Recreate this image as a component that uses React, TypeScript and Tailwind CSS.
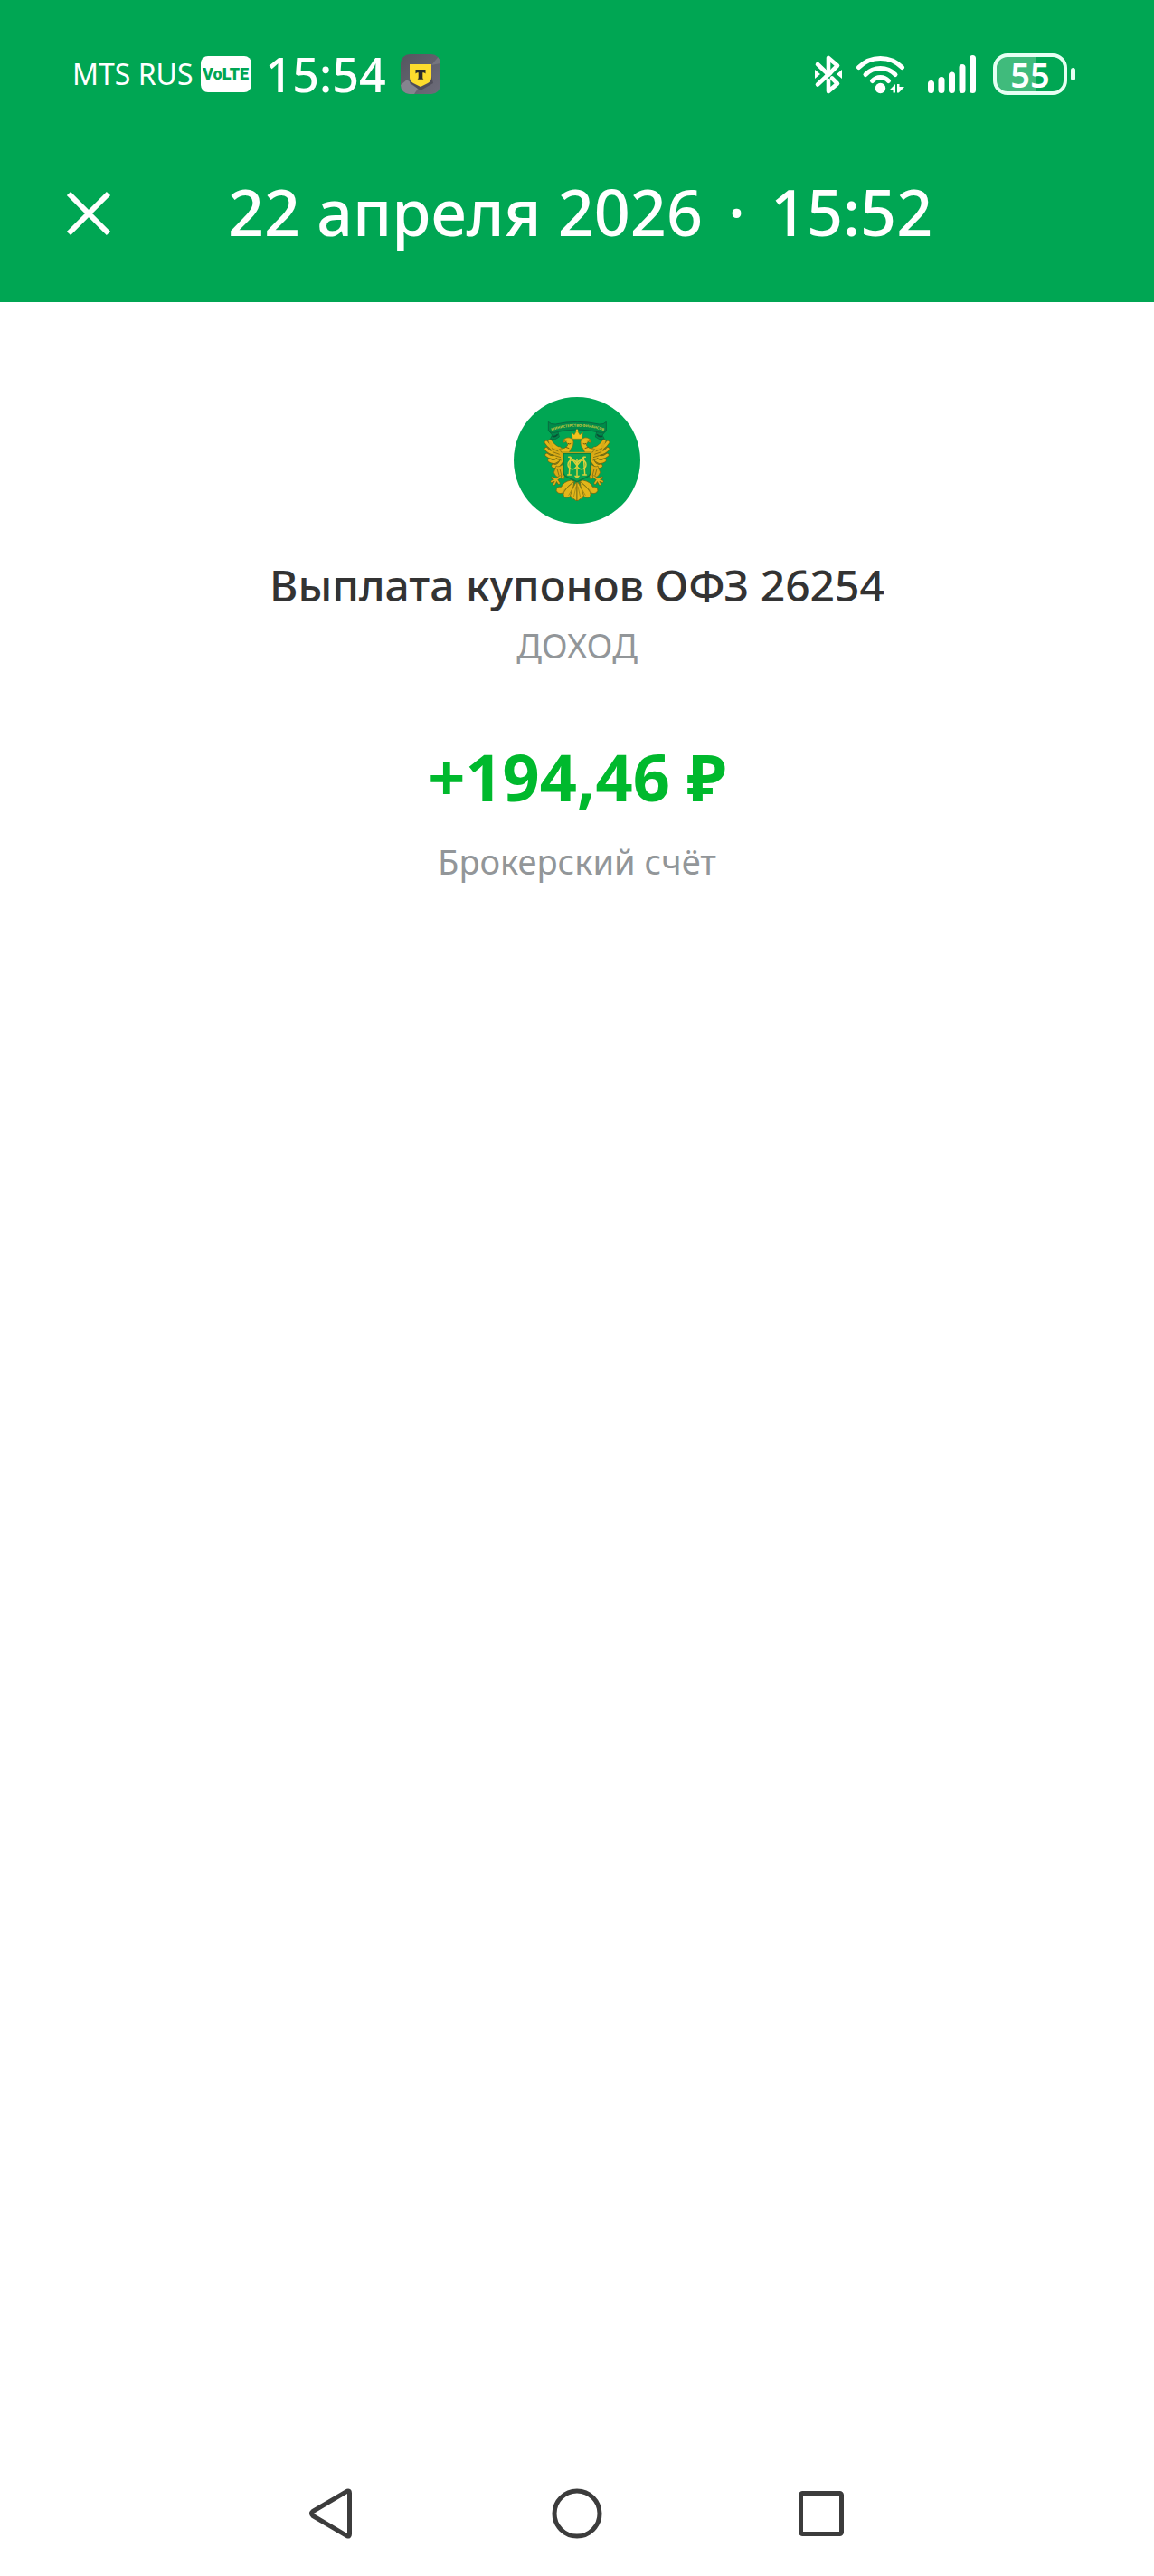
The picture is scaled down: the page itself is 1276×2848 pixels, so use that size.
import type { ReactNode } from 'react';

function TBankIcon() {
  return (
    <svg viewBox="0 0 44 44" className="size-11" aria-hidden="true">
      <defs>
        <linearGradient id="tile" x1="0" y1="0" x2="1" y2="1">
          <stop offset="0" stopColor="#55565f" />
          <stop offset="1" stopColor="#6d6c7a" />
        </linearGradient>
        <clipPath id="tileClip">
          <rect width="44" height="44" rx="10" />
        </clipPath>
      </defs>
      <g clipPath="url(#tileClip)">
        <rect width="44" height="44" fill="url(#tile)" />
        <path d="M44 0v10L34 12z" fill="#75757f" />
        <path d="M0 34l7-6 12 10-4 6H0z" fill="#85848f" />
        <path d="M10 32l12 8 14-8-2-8-22 0z" fill="#3f3e4a" opacity="0.6" />
      </g>
      <path d="M10 11h24v15c0 3-2 5-4 6l-8 4-8-4c-2-1-4-3-4-6z" fill="#fddc2d" />
      <path d="M16.500 17h11v4.500c-.7-.9-1.800-1.300-3.200-1.300v5.300c0 1.200.5 1.900 1.300 2.300h-7.200c.8-.4 1.300-1.100 1.300-2.300v-5.300c-1.400 0-2.500.4-3.200 1.300z" fill="#2b2b2b" />
    </svg>
  );
}

function BluetoothIcon() {
  return (
    <svg viewBox="0 0 32 44" className="h-11 w-8" aria-hidden="true">
      <g fill="none" stroke="white" strokeWidth="4.600" strokeLinecap="round" strokeLinejoin="round">
        <path d="M4 11l12 11.500L26 12.500 16 4v12" />
        <path d="M4 33.500L16 22.500M16 29v12l10-8.500-6-6" />
        <path d="M14 24l4-3" />
      </g>
      <path d="M1 17v10l6-5zM31 17v10l-6-5z" fill="white" />
    </svg>
  );
}

function WifiIcon() {
  return (
    <svg viewBox="0 0 56 44" className="h-11 w-14" aria-hidden="true">
      <g fill="none" stroke="white" strokeWidth="5" strokeLinecap="round">
        <path d="M3.500 14.500c13-13.500 35-13.500 48 0" />
        <path d="M11 22.500c9-9.300 24-9.300 33 0" />
        <path d="M18.500 29.500c5-5.300 13-5.300 18 0" />
      </g>
      <circle cx="27.500" cy="37.500" r="5.700" fill="white" />
      <path d="M37.500 39.500l6.500-6.500v9.500h-2.500v-3zM46 33h2.500v3H54L47.800 42.500H46z" fill="white" />
    </svg>
  );
}

function SignalIcon() {
  return (
    <svg viewBox="0 0 54 44" className="h-11 w-[54px]" aria-hidden="true">
      <g stroke="white" strokeWidth="7" strokeLinecap="round">
        <path d="M3.500 32.500v7M15 28.500v11M26.500 23v16.500M38 14.500v25M49.500 4.500v35" />
      </g>
    </svg>
  );
}

function Battery() {
  return (
    <div className="flex items-center gap-1" aria-label="Battery 55%">
      <div className="flex h-[46px] w-[82px] items-center justify-center rounded-2xl border-4 border-[#e6fff3] bg-linear-to-r from-[#40bb7c] from-60% to-transparent to-60% text-[38px] leading-9 font-semibold">
        55
      </div>
      <div className="h-3.5 w-[5px] rounded-full bg-[#e6fff3]" />
    </div>
  );
}

const leftHalf = (
  <g>
    <path d="M142 174l12 26 36 0v42l-28 18-20-30-8-34z" fill="#8a7a12" />
    <g fill="none" stroke="#6f6a14" strokeWidth="13" strokeLinecap="round">
      <path d="M176 196Q150 204 132 176M178 206Q150 220 132 198M180 214Q154 236 134 218M184 220Q162 250 143 236M188 226Q174 262 155 254M190 204Q160 196 144 172" />
    </g>
    <g fill="none" stroke="#e3b417" strokeWidth="9" strokeLinecap="round">
      <path d="M176 196Q150 204 132 176M178 206Q150 220 132 198M180 214Q154 236 134 218M184 220Q162 250 143 236M188 226Q174 262 155 254M190 204Q160 196 144 172" />
    </g>
    <path d="M140 174q8-4 10 4l4 16 34 2-4 40-14-6-20-20z" fill="#d9aa16" />
    <path d="M150 196l22 10M154 208l22 8M160 220l20 6M168 232l14 4" stroke="#7a6a10" strokeWidth="2.500" fill="none" />
    <path d="M176 198q22 0 28-14l-6-10q-8 4-12 2 2-12 14-15 16-3 22 12 2 14-8 24l-6 12h-26z" fill="#e6b91b" stroke="#6f6a14" strokeWidth="2" />
    <path d="M188 175q6-8 14-6M204 180q6 4 10 0M196 192l12 4" stroke="#6a5a0e" strokeWidth="3" fill="none" />
    <path d="M186 250q-14 10-21 4l-8 22q4 14 18 18l15 4q8-22-4-48z" fill="#d9aa16" stroke="#6f6a14" strokeWidth="2" />
    <path d="M168 264l6 22M177 264l6 24" stroke="#7a6a10" strokeWidth="2.500" />
    <path d="M178 290l-12 10-14-6M166 300l-16 6M166 300l-8 15M166 300l8 12" stroke="#6f6a14" strokeWidth="9" strokeLinecap="round" fill="none" />
    <path d="M178 290l-12 10-14-6M166 300l-16 6M166 300l-8 15M166 300l8 12" stroke="#dfb21a" strokeWidth="5" strokeLinecap="round" fill="none" />
    <g fill="#e3b61a" stroke="#6f6a14" strokeWidth="2.500">
      <path d="M214 302q-24 4-32 22-16-2-17 12 6 14 22 8 24-12 40-38z" />
      <path d="M224 306q-22 14-34 36-4 15 8 18 16 0 22-20z" />
      <path d="M234 304q-18 24-22 48 2 12 12 12 6 6 10 6z" />
    </g>
    <path d="M218 312l-28 24M226 318l-20 34M231 322l-8 36" stroke="#8a7a12" strokeWidth="2" fill="none" />
  </g>
);

function MinistryEmblem() {
  return (
    <svg viewBox="24 26 420 420" className="size-[140px]" role="img" aria-label="Министерство финансов">
      <defs>
        <path id="ribbonLine" d="M152 137Q192 124 236 124T320 137" />
      </defs>
      <circle cx="234" cy="236" r="210" fill="#00a653" />
      <path d="M140 138l12 14-7 14q18 4 30-8l-4-16zM330 138l-12 14 7 14q-18 4-30-8l4-16z" fill="#00874a" stroke="#086b40" strokeWidth="3" />
      <path d="M152 156q10 4 18-6M318 156q-10 4-18-6" stroke="#0a4f34" strokeWidth="5" fill="none" />
      <path d="M139 108q8 10 24 8 34-8 72-8t72 8q16 2 24-8v30q-8 8-20 6-36-10-76-10t-76 10q-14 2-20-6z" fill="#008b49" stroke="#086b40" strokeWidth="3" />
      <text fill="#c5c93c" fontSize="12" fontWeight="700">
        <textPath href="#ribbonLine" startOffset="50%" textAnchor="middle">МИНИСТЕРСТВО ФИНАНСОВ</textPath>
      </text>
      {leftHalf}
      <g transform="matrix(-1 0 0 1 468 0)">{leftHalf}</g>
      <path d="M216 143l9 8 9-16 9 16 10-8-3 22h-31z" fill="#f4c21c" stroke="#8a7a12" strokeWidth="2" />
      <circle cx="234" cy="136" r="3.500" fill="#f4c21c" />
      <path d="M222 184h24l-12 14z" fill="#00a653" />
      <path d="M189 212h90v62q0 12-12 17l-33 16-33-16q-12-5-12-17z" fill="#0aa451" stroke="#0b7a3c" strokeWidth="4" />
      <path d="M189 210h90" stroke="#d8ae18" strokeWidth="3" />
      <g fill="none" stroke="#dcd03a" strokeWidth="4.500" strokeLinecap="round" strokeLinejoin="round">
        <path d="M212 225l-4 58M256 225l4 58M206 225h6l22 28 22-28h6M203 284h11M254 284h11" />
        <path d="M234 232v56M228 288l6 6 6-6" />
        <ellipse cx="219" cy="250" rx="15" ry="15" />
        <ellipse cx="249" cy="250" rx="15" ry="15" />
      </g>
    </svg>
  );
}

function NavButton({ label, children }: { label: string; children: ReactNode }) {
  return (
    <button type="button" aria-label={label} className="flex size-24 items-center justify-center">
      <svg viewBox="0 0 60 60" className="size-15" fill="none" stroke="#3c3c3c" strokeWidth="5" strokeLinejoin="round">
        {children}
      </svg>
    </button>
  );
}

export default function App() {
  return (
    <div className="flex min-h-screen flex-col bg-white font-['Noto_Sans',sans-serif]">
      <header className="bg-[#00a653] pb-[30px] text-white">
        <div className="flex h-41 items-center justify-between pr-[87px] pl-20">
          <div className="flex items-center">
            <span className="text-[32px] leading-10">MTS RUS</span>
            <span className="ml-2 flex h-10 w-14 items-center justify-center rounded-lg bg-white font-['Roboto',sans-serif] text-[18px] leading-6 font-black text-[#00a653]">
              VoLTE
            </span>
            <time className="ml-4 text-[52px] leading-16 font-medium">15:54</time>
            <span className="ml-4">
              <TBankIcon />
            </span>
          </div>
          <div className="flex items-center">
            <BluetoothIcon />
            <span className="ml-3.5">
              <WifiIcon />
            </span>
            <span className="ml-6">
              <SignalIcon />
            </span>
            <span className="ml-[18px]">
              <Battery />
            </span>
          </div>
        </div>
        <div className="flex h-35 items-center pl-[66px]">
          <button type="button" aria-label="Закрыть" className="flex size-16 items-center justify-center">
            <svg viewBox="0 0 64 64" className="size-16" stroke="white" strokeWidth="6" aria-hidden="true">
              <path d="M10 12l44 44M54 12L10 56" />
            </svg>
          </button>
          <h1 className="ml-[122px] flex gap-7 text-[70px] leading-24 font-medium whitespace-nowrap">
            <span>22 апреля 2026</span>
            <span>·</span>
            <time>15:52</time>
          </h1>
        </div>
      </header>

      <main className="flex flex-1 flex-col items-center pt-[105px] text-center">
        <MinistryEmblem />
        <h2 className="mt-9 text-[48px] leading-16 font-medium text-[#333333]">Выплата купонов ОФЗ 26254</h2>
        <p className="mt-2 text-[38px] leading-13 text-[#929699]">ДОХОД</p>
        <p className="mt-[75px] text-[72px] leading-22 font-bold text-[#00b92d]">+194,46 ₽</p>
        <p className="mt-6 text-[38px] leading-13 text-[#929699]">Брокерский счёт</p>
      </main>

      <nav className="flex h-[138px] items-center justify-center gap-[174px]">
        <NavButton label="Назад">
          <path d="M8 27.500L46 5.200q2.500-.8 2.500 2v45.600q0 2.800-2.500 2L8 32.500q-3-2.500 0-5z" />
        </NavButton>
        <NavButton label="Домой">
          <circle cx="30" cy="30" r="25" />
        </NavButton>
        <NavButton label="Недавние">
          <rect x="7.500" y="7.500" width="45" height="45" rx="2" />
        </NavButton>
      </nav>
    </div>
  );
}
